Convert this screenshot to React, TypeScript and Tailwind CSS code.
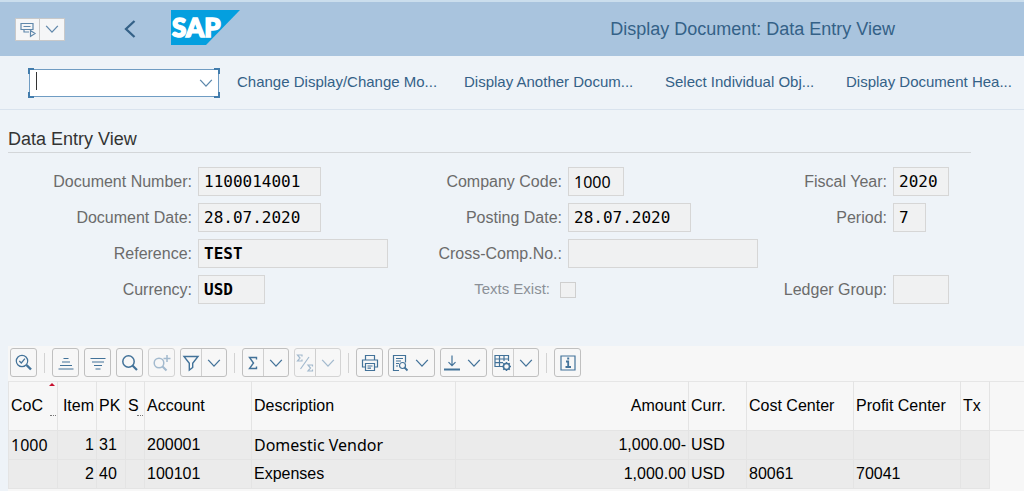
import React from 'react';

type IconProps = { children: React.ReactNode; className?: string };

const Icon = ({ children, className = 'w-[18px] h-[18px]' }: IconProps) => (
  <svg viewBox="0 0 18 18" fill="none" stroke="currentColor" strokeWidth="1.2" className={`shrink-0 ${className}`} aria-hidden="true">
    {children}
  </svg>
);

const Chevron = () => (
  <Icon className="w-[14px] h-[14px]">
    <path d="M1.500 5L9 13l7.500-8" strokeWidth="1.7" />
  </Icon>
);

const icons = {
  details: (
    <Icon>
      <circle cx="7" cy="7" r="5.7" />
      <path d="M4.3 7l2 2 3.6-4.4" />
      <path d="M11.5 11l4.5 4.5" strokeWidth="2.4" />
    </Icon>
  ),
  sortUp: (
    <Icon>
      <path d="M6.500 4.500h5M5 8h8M3 11.500h12M1.500 15h15" />
    </Icon>
  ),
  sortDown: (
    <Icon>
      <path d="M1.500 4.500h15M3 8h12M5 11.500h8M6.500 15h5" />
    </Icon>
  ),
  find: (
    <Icon>
      <circle cx="7.500" cy="7.500" r="5.700" strokeWidth="1.500" />
      <path d="M11.500 11.500l4.500 4.500" strokeWidth="2.200" />
    </Icon>
  ),
  findNext: (
    <Icon>
      <circle cx="6" cy="9" r="4.800" strokeWidth="1.500" />
      <path d="M9.500 12.500l4 4" strokeWidth="2.200" />
      <path d="M14 1v7M10.500 4.500h7" strokeWidth="1.500" />
    </Icon>
  ),
  filter: (
    <Icon>
      <path d="M2 2.500h14l-5.300 6.700v4.300l-3.400 2.500V9.200z" strokeWidth="1.400" />
    </Icon>
  ),
  sum: (
    <Icon>
      <path d="M12.500 5.500V3.500H5.500l4 5.500-4 5.500h7v-2" strokeWidth="1.400" />
    </Icon>
  ),
  subtotal: (
    <Icon>
      <path d="M6 2.500V1H1.500l2.500 3-2.500 3H6V5.500M16.500 12.500V11H12l2.500 3-2.500 3h4.500v-1.500M13 3L4.500 15" />
    </Icon>
  ),
  print: (
    <Icon>
      <path d="M4.500 6V1.500h9V6M4.500 13H1.500V6h15v7h-3M4.500 9.500h9v7h-9zM6.500 12h5M6.500 14.200h3.500" />
    </Icon>
  ),
  preview: (
    <Icon>
      <path d="M8 16.500H2.500v-15h12v7M5 4.500h7M5 7h5M5 9.500h3M5 12h2" />
      <circle cx="11.500" cy="11.500" r="3" />
      <path d="M13.500 13.500l3 3" strokeWidth="1.800" />
    </Icon>
  ),
  download: (
    <Icon>
      <path d="M9 1.500v10M5.500 8.200L9 11.700l3.500-3.500" />
      <path d="M1 15.500h16" strokeWidth="2" />
    </Icon>
  ),
  layout: (
    <Icon>
      <path d="M8 12.500H1v-11h13.500V7M1 5h13.500M1 8.700h8M5.500 1.500v11M10 1.500V7" />
      <circle cx="12.500" cy="12.500" r="3" strokeWidth="1.500" />
      <path d="M12.500 8v1.500M12.500 15.500V17M8 12.500h1.500M15.500 12.500H17M9.300 9.300l1.100 1.100M14.600 14.600l1.100 1.100M9.300 15.700l1.100-1.100M14.600 10.400l1.100-1.100" strokeWidth="1.500" />
    </Icon>
  ),
  info: (
    <Icon>
      <path d="M2 2h14v14H2z" />
      <path d="M7 7.500h2.200V13M6.500 13h5.500M8.200 4.500h2" strokeWidth="1.800" />
    </Icon>
  ),
};

const SapLogo = () => (
  <svg viewBox="0 0 69 35" className="h-[35px] w-[69px]" role="img" aria-label="SAP">
    <path d="M0 0h69L35 35H0z" fill="#049fdf" />
    <text x="1" y="27" fill="#fff" stroke="#fff" strokeWidth="1.5" fontFamily="Lato, sans-serif" fontWeight="900" fontSize="26">SAP</text>
  </svg>
);

interface ToolProps {
  icon: React.ReactNode;
  label: string;
  menu?: boolean;
  split?: boolean;
  disabled?: boolean;
}

const Tool = ({ icon, label, menu, split, disabled }: ToolProps) => (
  <button
    type="button"
    title={label}
    aria-label={label}
    disabled={disabled}
    className={`flex h-[29px] items-center rounded-[3px] border border-[#c0c0c0] text-[#427299] disabled:border-[#d4d4d4] disabled:text-[#a3bace] ${menu ? 'w-[47px]' : 'w-[27px] justify-center'}`}
  >
    <span className={`flex h-full items-center justify-center ${menu ? 'w-[21px]' : ''} ${split ? 'border-r border-[#cfcfcf]' : ''}`}>{icon}</span>
    {menu && <span className="flex flex-1 justify-center"><Chevron /></span>}
  </button>
);

const Divider = () => <span className="mx-0.5 h-5 w-px bg-[#d3d3d3]" />;

interface FieldProps {
  id: string;
  label: string;
  value?: string;
  labelWidth: string;
  width: string;
  font?: string;
}

const MONO = "font-['DejaVu_Sans_Mono',monospace] text-[16px]";
const MONO_BOLD = "font-['DejaVu_Sans_Mono',monospace] text-[16px] font-bold";
const HUMAN = "font-['Noto_Sans',sans-serif] text-[16px]";

const Field = ({ id, label, value = '', labelWidth, width, font = MONO }: FieldProps) => (
  <div className="flex h-[29px] items-center gap-[6px]">
    <label htmlFor={id} className={`shrink-0 whitespace-nowrap text-right text-[16px] text-[#6b6b6b] ${labelWidth}`}>{label}</label>
    <input id={id} readOnly value={value} className={`h-full border border-[#d6d6d6] bg-[#f0f1f2] px-[5px] text-black outline-none ${width} ${font}`} />
  </div>
);

const actions = [
  { label: 'Change Display/Change Mo...', width: 'w-[227px]' },
  { label: 'Display Another Docum...', width: 'w-[201px]' },
  { label: 'Select Individual Obj...', width: 'w-[181px]' },
  { label: 'Display Document Hea...', width: '' },
];

const columns = [
  { title: 'CoC', width: 'w-[49px]', more: true },
  { title: 'Item', width: 'w-[39px]', right: true },
  { title: 'PK', width: 'w-[29px]' },
  { title: 'S', width: 'w-[19px]', more: true },
  { title: 'Account', width: 'w-[107px]' },
  { title: 'Description', width: 'w-[204px]' },
  { title: 'Amount', width: 'w-[233px]', right: true },
  { title: 'Curr.', width: 'w-[58px]' },
  { title: 'Cost Center', width: 'w-[107px]' },
  { title: 'Profit Center', width: 'w-[107px]' },
  { title: 'Tx', width: 'w-[29px]' },
];

const rows = [
  ['1000', '1', '31', '', '200001', 'Domestic Vendor', '1,000.00-', 'USD', '', '', ''],
  ['', '2', '40', '', '100101', 'Expenses', '1,000.00', 'USD', '80061', '70041', ''],
];

export default function App() {
  return (
    <div className="min-h-screen bg-[#eef3f8] font-['Liberation_Sans',Arial,sans-serif]">
      <header className="flex h-14 items-center border-t-2 border-[#cbdeed] bg-[#a9c4de] text-[#346187]">
        <button type="button" aria-label="Menu" className="ml-[15px] flex h-[23px] w-[50px] items-center border border-[#c9c9c9] bg-[#f5f6f7] text-[#6088ab]">
          <span className="flex h-full w-6 items-center justify-center border-r border-[#c9c9c9]">
            <Icon>
              <path d="M2 3.500h12v6H2zM4.500 6.500h7M5 9.500v2.500h5M11.500 10.500l4.500 3-4.500 3z" />
            </Icon>
          </span>
          <span className="flex flex-1 justify-center"><Chevron /></span>
        </button>
        <button type="button" aria-label="Back" className="ml-[58px] flex w-3.5 justify-center">
          <svg viewBox="0 0 12 18" className="h-[18px] w-3" fill="none" stroke="currentColor" strokeWidth="2.300">
            <path d="M10.500 1L2 9l8.500 8" />
          </svg>
        </button>
        <div className="mb-1 ml-[34px]"><SapLogo /></div>
        <h1 className="ml-auto mr-[129px] text-[18px]">Display Document: Data Entry View</h1>
      </header>

      <nav className="flex h-[54px] items-center border-b border-[#d9e3ee] pl-[29px]">
        <div className="relative mr-[18px] h-7 w-[190px] shrink-0 border border-[#6f9cc3] bg-white">
          <input autoComplete="off" aria-label="Command" className="h-full w-full px-1.5 text-[16px] outline-none" />
          <span className="absolute left-[6px] top-[2px] h-[18px] w-px bg-[#333]" />
          <span className="absolute right-[5px] top-[6px] text-[#5b87ab]"><Chevron /></span>
          <span className="absolute -left-0.5 -top-0.5 h-1.5 w-1.5 border-l-2 border-t-2 border-[#427cac]" />
          <span className="absolute -right-0.5 -top-0.5 h-1.5 w-1.5 border-r-2 border-t-2 border-[#427cac]" />
          <span className="absolute -bottom-0.5 -left-0.5 h-1.5 w-1.5 border-b-2 border-l-2 border-[#427cac]" />
          <span className="absolute -bottom-0.5 -right-0.5 h-1.5 w-1.5 border-b-2 border-r-2 border-[#427cac]" />
        </div>
        {actions.map(a => (
          <button key={a.label} type="button" className={`shrink-0 whitespace-nowrap text-left text-[15px] text-[#346187] ${a.width}`}>{a.label}</button>
        ))}
      </nav>

      <section className="pl-2">
        <h2 className="mr-[53px] border-b border-[#d3d6d9] pt-[17px] text-[18px] leading-[25px] text-[#333]">Data Entry View</h2>
        <form className="mt-3.5 grid grid-cols-[430fr_337fr_249fr]">
          <div className="flex flex-col gap-[7px]">
            <Field id="docno" label="Document Number:" value="1100014001" labelWidth="w-[184px]" width="w-[123px]" />
            <Field id="docdate" label="Document Date:" value="28.07.2020" labelWidth="w-[184px]" width="w-[123px]" />
            <Field id="ref" label="Reference:" value="TEST" labelWidth="w-[184px]" width="w-[190px]" font={MONO_BOLD} />
            <Field id="currency" label="Currency:" value="USD" labelWidth="w-[184px]" width="w-[67px]" font={MONO_BOLD} />
          </div>
          <div className="flex flex-col gap-[7px]">
            <Field id="company" label="Company Code:" value="1000" labelWidth="w-[124px]" width="w-[56px]" font={HUMAN} />
            <Field id="postdate" label="Posting Date:" value="28.07.2020" labelWidth="w-[124px]" width="w-[123px]" />
            <Field id="cross" label="Cross-Comp.No.:" labelWidth="w-[124px]" width="w-[190px]" />
            <div className="flex h-[29px] items-center gap-2.5">
              <label htmlFor="texts" className="w-[112px] text-right text-[15px] text-[#8b9097]">Texts Exist:</label>
              <input id="texts" type="checkbox" disabled className="h-4 w-4 appearance-none border border-[#cfcfcf] bg-[#f0f1f2]" />
            </div>
          </div>
          <div className="flex flex-col gap-[7px]">
            <Field id="year" label="Fiscal Year:" value="2020" labelWidth="w-[112px]" width="w-[56px]" />
            <Field id="period" label="Period:" value="7" labelWidth="w-[112px]" width="w-[33px]" />
            <div className="h-[29px]" />
            <Field id="ledger" label="Ledger Group:" labelWidth="w-[112px]" width="w-[56px]" />
          </div>
        </form>
      </section>

      <section className="ml-2 mt-[42px] min-h-[145px] bg-[#f7f7f7]">
        <div className="flex h-[35px] items-center gap-[5px] pb-0.5 pl-0.5">
          <Tool icon={icons.details} label="Details" />
          <Divider />
          <Tool icon={icons.sortUp} label="Sort ascending" />
          <Tool icon={icons.sortDown} label="Sort descending" />
          <Tool icon={icons.find} label="Find" />
          <Tool icon={icons.findNext} label="Find next" disabled />
          <Tool icon={icons.filter} label="Filter" menu split />
          <Divider />
          <Tool icon={icons.sum} label="Total" menu split />
          <Tool icon={icons.subtotal} label="Subtotals" menu split disabled />
          <Divider />
          <Tool icon={icons.print} label="Print" />
          <Tool icon={icons.preview} label="Views" menu />
          <Tool icon={icons.download} label="Export" menu />
          <Tool icon={icons.layout} label="Layout" menu split />
          <Divider />
          <Tool icon={icons.info} label="Information" />
        </div>
        <table className="w-full table-fixed border-collapse whitespace-nowrap border-l border-[#e4e4e4] text-[16px] leading-5 text-black">
          <thead>
            <tr className="h-[49px] border-y border-[#e6e6e6]">
              {columns.map(c => (
                <th key={c.title} scope="col" className={`relative border-r border-[#e4e4e4] p-0 px-0.5 font-normal ${c.width} ${c.right ? 'text-right' : 'text-left'}`}>
                  {c.title}
                  {c.more && <span className="absolute bottom-[14px] right-px w-1.5 border-b border-dotted border-[#777]" />}
                  {c.title === 'CoC' && <span className="absolute right-0.5 top-px border-x-[3px] border-b-[3px] border-x-transparent border-b-[#c8102e]" />}
                </th>
              ))}
              <th className="p-0" />
            </tr>
          </thead>
          <tbody>
            {rows.map((row, i) => (
              <tr key={i} className="h-[29px]">
                {row.map((cell, j) => (
                  <td
                    key={j}
                    className={`border border-[#e4e4e4] bg-[#ebebeb] p-0 px-0.5 ${columns[j].right ? 'text-right' : ''} ${cell === '1000' || cell === 'Domestic Vendor' ? "font-['Noto_Sans',sans-serif]" : ''}`}
                  >
                    {cell}
                  </td>
                ))}
                <td className="p-0" />
              </tr>
            ))}
          </tbody>
        </table>
      </section>
    </div>
  );
}
